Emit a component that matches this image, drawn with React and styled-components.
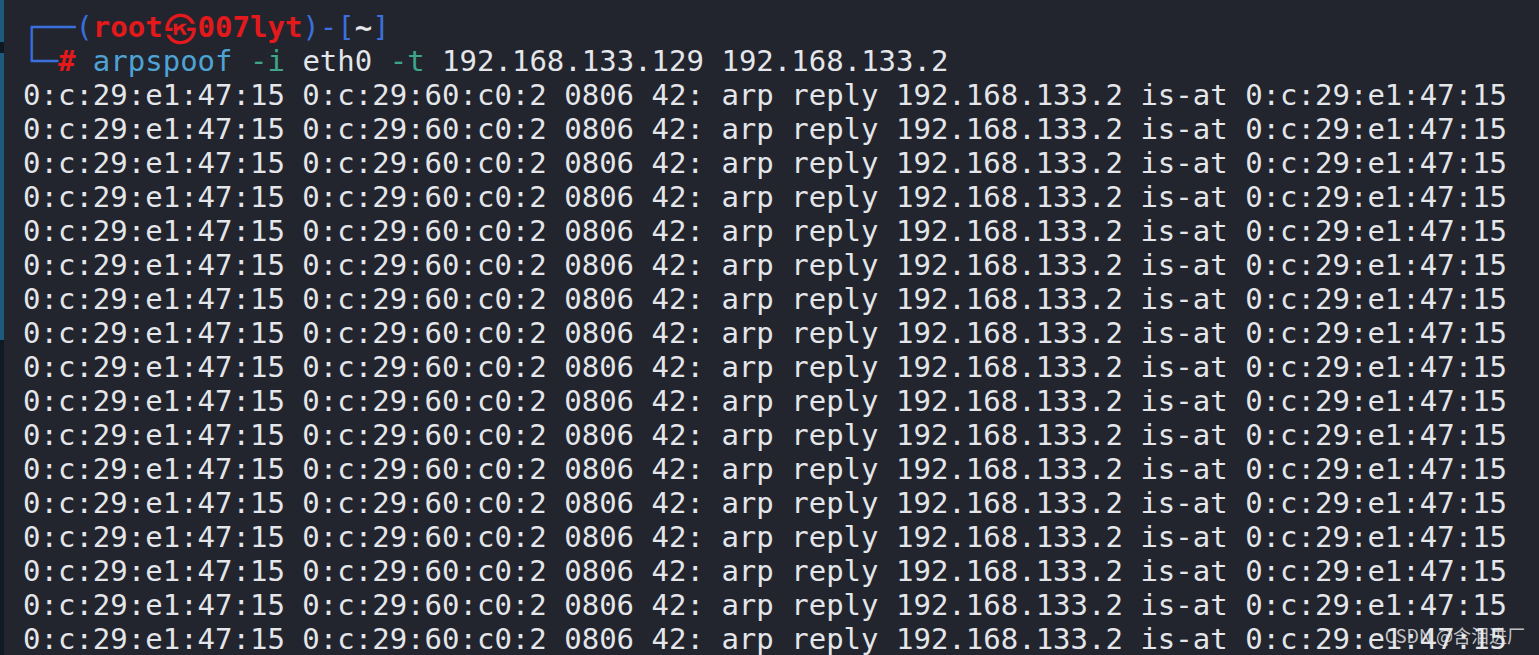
import React from 'react';
import styled, { createGlobalStyle } from 'styled-components';

const GlobalStyle = createGlobalStyle`
  html, body {
    margin: 0;
    padding: 0;
    background: #22252e;
    overflow: hidden;
  }
`;

const Window = styled.div`
  display: flex;
  height: 100vh;
  background: #22252e;
  position: relative;
`;

const EdgeStrip = styled.div`
  width: 4px;
  flex-shrink: 0;
  background: linear-gradient(
    to bottom,
    #1c5a7e 0,
    #1c5a7e 42px,
    #0e1822 42px,
    #0e1822 53px,
    #1c5a7e 53px,
    #1c5a7e 340px,
    #101a24 340px
  );
`;

const Screen = styled.pre`
  margin: 0;
  padding: 10px 0 0 19px;
  font-family: 'DejaVu Sans Mono', 'Liberation Mono', 'Noto Sans CJK SC', monospace;
  font-size: 29px;
  line-height: 34px;
  color: #e4e6ea;
  white-space: pre;
`;

const Line = styled.div`
  height: 34px;
`;

const Part = styled.span`
  color: ${p => p.$color || 'inherit'};
  font-weight: ${p => (p.$bold ? 'bold' : 'normal')};
`;

const Skull = styled.span`
  font-family: 'Noto Sans CJK SC', 'DejaVu Sans', sans-serif;
  font-weight: bold;
  font-size: 32px;
  display: inline-block;
  width: 34.9px;
  text-align: center;
  line-height: 34px;
  vertical-align: top;
`;

const Watermark = styled.div`
  position: absolute;
  right: 14px;
  bottom: 7px;
  font-family: 'Noto Sans CJK SC', 'Liberation Sans', sans-serif;
  font-size: 18px;
  color: rgba(235, 235, 235, 0.8);
`;

const BLUE = '#3a6fdc';
const RED = '#e3191c';
const CMD = '#4ea3d4';
const FLAG = '#3ea58a';

const reply =
  '0:c:29:e1:47:15 0:c:29:60:c0:2 0806 42: arp reply 192.168.133.2 is-at 0:c:29:e1:47:15';

const App = () => (
  <Window>
    <GlobalStyle />
    <EdgeStrip />
    <Screen>
      <Line>
        <Part $color={BLUE}>┌──(</Part>
        <Part $color={RED} $bold>
          root<Skull>㉿</Skull>007lyt
        </Part>
        <Part $color={BLUE}>)-[</Part>
        <Part $bold>~</Part>
        <Part $color={BLUE}>]</Part>
      </Line>
      <Line>
        <Part $color={BLUE}>└─</Part>
        <Part $color={RED} $bold>#</Part>{' '}
        <Part $color={CMD}>arpspoof</Part>{' '}
        <Part $color={FLAG}>-i</Part> eth0{' '}
        <Part $color={FLAG}>-t</Part> 192.168.133.129 192.168.133.2
      </Line>
      {Array.from({ length: 17 }, (_, i) => (
        <Line key={i}>{reply}</Line>
      ))}
    </Screen>
    <Watermark>CSDN @含泪进厂</Watermark>
  </Window>
);

export default App;
